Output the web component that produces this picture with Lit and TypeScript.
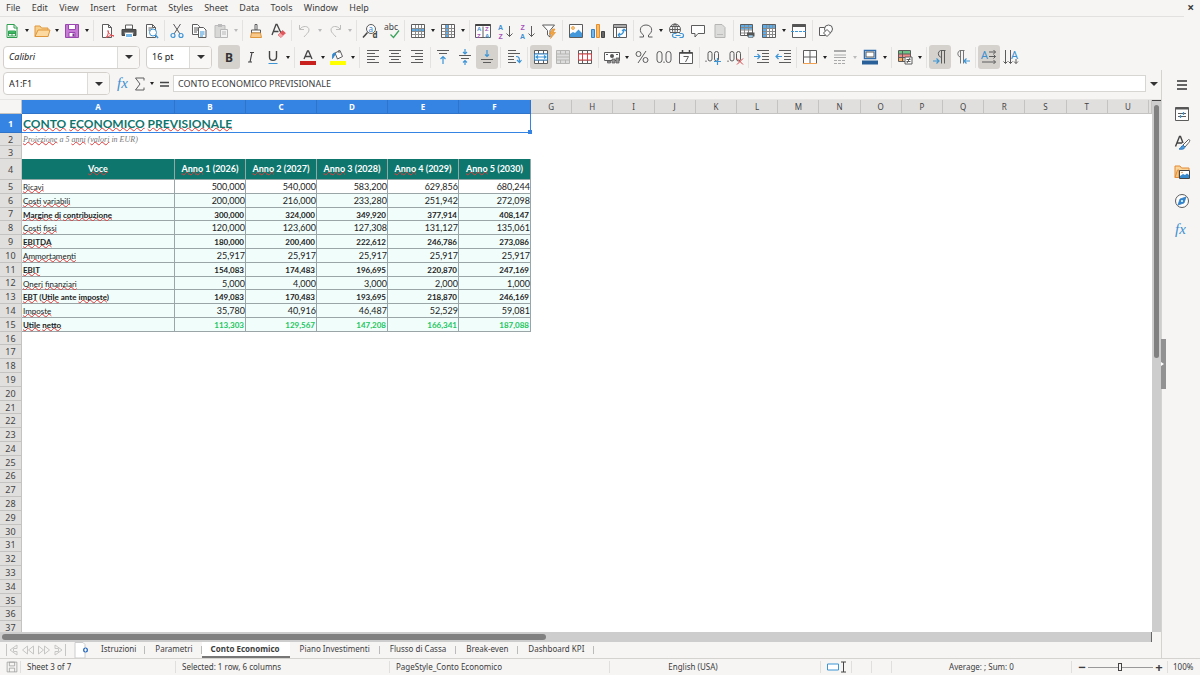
import { LitElement, html, css, svg, nothing } from "lit";
import { customElement, property } from "lit/decorators.js";
import { classMap } from "lit/directives/class-map.js";

const grid = (fill: unknown) => svg`<path d="M1.5 1.5h13v13h-13z" fill="#fdfdfd"/>${fill}<path d="M1.5 5.5h13M1.5 8.5h13M1.5 11.5h13M5.5 1.5v13M8.5 1.5v13M11.5 1.5v13" fill="none" stroke="#8a8a8a"/><path d="M1.5 1.5h13v13h-13z" class="k"/>`;
const pages = svg`<path d="M3.5 1.5h6l3 3v10h-9zM9.5 1.5v3h3" class="k w"/>`;
const decimals = svg`<path d="M1 11.5v1.500" class="k"/><rect x="3" y="2.500" width="4" height="9.500" rx="2" class="k"/><rect x="9.500" y="2.500" width="4" height="9.500" rx="2" class="k"/>`;

const ICONS: Record<string, unknown> = {
  new: svg`<path d="M3 1.500h7l3 3v10H3z" fill="#fff" stroke="#2e9e4f"/><path d="M10 1v4h3.500M4.500 8h7v5h-7zM4.500 10.500h7M8 8v5" fill="none" stroke="#2e9e4f"/><path d="M5 8h6v2H5z" fill="#3db562"/>`,
  open: svg`<path d="M1 13.500V3h5l1.500 2H14v8.500z" fill="#f7d08c" stroke="#e0963a"/><path d="M1 13.500 4 7h12l-2 6.500z" fill="#fbd9a0" stroke="#e0963a"/>`,
  save: svg`<path d="M1.500 1.500h13v13h-13z" fill="#c77bd6" stroke="#9b46b0"/><path d="M4.500 1.500h7v5h-7zM5 14V9.500h6V14z" fill="#fff" stroke="#9b46b0"/><path d="M8.500 10.500h2v3h-2z" fill="#7d3590"/>`,
  pdf: svg`${pages}<path d="M7 14.500c3-3 2.500-7 2-7s0 4 6 5.500c-3-1-5 0-8 1.500z" fill="#fff" stroke="#e0474c"/>`,
  print: svg`<path d="M4.500 2h7v4h-7z" class="k w"/><path d="M1 6.500h14v6H1z" fill="#555" stroke="#444"/><path d="M3.500 10h9" stroke="#ddd"/><path d="M4.500 10.500h7v4h-7z" fill="#7ab8e8" stroke="#fff"/>`,
  preview: svg`${pages}<path d="M5.500 5h4M5.500 7h2" class="k"/><circle cx="10" cy="9.500" r="3.500" fill="#fff" stroke="#3d95d6"/><path d="m12.500 12 2.500 3" stroke="#3d95d6" stroke-width="1.500"/>`,
  cut: svg`<path d="M4.500 1 11 11M11.500 1 5 11" class="k"/><circle cx="4" cy="12.500" r="2" class="b"/><circle cx="12" cy="12.500" r="2" class="b"/>`,
  copy: svg`<path d="M1.500 1.500h5l2 2v8h-7zM3 5h4M3 7h4M3 9h3" class="k w"/><path d="M7.500 4.500h5l2.500 2.500v7.500H7.500z" class="k w"/><path d="M9 9h4.500M9 11h4.500M9 13h3" class="b"/>`,
  paste: svg`<path d="M2 2.500h10v12H2z" fill="#d8d8d6" stroke="#bbb"/><path d="M5 1h4v3H5z" fill="#bbb"/><path d="M7.500 6.500h7v8h-7zM9 9h4M9 11h4" fill="#f2f2f2" stroke="#b8b8b8"/>`,
  brush: svg`<path d="M7 1.500h2v5.500H7z" class="k w"/><path d="M3.500 7h9v3h-9z" class="k w"/><path d="m3.500 10-1 4.500h11l-1-4.500z" fill="#f8c98a" stroke="#e0963a"/>`,
  clear: svg`<path d="m2 12 4-10.500h1L11 10M3.500 8.500h5" fill="none" stroke="#444" stroke-width="1.300"/><path d="m8 12 4.500-4.500 3 2.500-4.500 4.500z" fill="#e0565b" stroke="#d23b41" stroke-width=".5"/><path d="m8 12 2-2 3 2.500-2 2z" fill="#f4a4a7"/>`,
  undo: svg`<path d="M2.500 2v4.500H7M3 6c2.500-3.500 9-3.500 9 1 0 3-3 4-5 7" fill="none" stroke="#bdbdbb"/>`,
  redo: svg`<path d="M13.500 2v4.500H9M13 6C10.500 2.500 4 2.500 4 7c0 3 3 4 5 7" fill="none" stroke="#bdbdbb"/>`,
  find: svg`<circle cx="9" cy="6" r="4.500" class="k w"/><path d="m5.500 9.500-4.500 5" stroke="#444" stroke-width="1.500"/><text x="6.500" y="8.500" font-size="8" fill="#2f87d0">a</text><text x="10.500" y="15" font-size="8" fill="#444" font-weight="700">d</text>`,
  abc: svg`<text x="0" y="7" font-size="8.500" fill="#444">abc</text><path d="m6.500 11.500 3 3L15 7.500" fill="none" stroke="#3aa35b" stroke-width="1.300"/>`,
  row: grid(svg`<path d="M1.500 5h13v4h-13z" fill="#5aaceb"/>`),
  col: grid(svg`<path d="M5 1.500h4v13H5z" fill="#5aaceb"/>`),
  sort: svg`<path d="M.5 1.500h15v13H.5zM8 3.500v11" class="k w"/><path d="M.5 2h15" stroke="#444" stroke-width="2"/><g font-size="6" class="az"><text x="2" y="8" class="bt">A</text><text x="2" y="14.500" class="pt">Z</text><text x="10" y="8" class="pt">Z</text><text x="10" y="14.500" class="bt">A</text></g>`,
  az: svg`<g font-size="7" class="az"><text x="1" y="7" class="bt">A</text><text x="1.500" y="15.500" class="pt">Z</text></g><path d="M12.500 3v10.500m-3-3 3 3 3-3" class="k"/>`,
  za: svg`<g font-size="7" class="az"><text x="1.500" y="7" class="pt">Z</text><text x="1" y="15.500" class="bt">A</text></g><path d="M12.500 3v10.500m-3-3 3 3 3-3" class="k"/>`,
  filter: svg`<path d="M1.500 2h12L9 7.500V14l-2.500-2V7.500z" class="k w"/><path d="m11.500 6-3 5h2.500l-1.500 4.500 5-6H12l2-3.500z" fill="#f2a645" stroke="#e38a20" stroke-width=".6"/>`,
  image: svg`<path d="M1.500 1.500h13v13h-13z" class="k w"/><circle cx="5" cy="5" r="1.500" fill="#f7c77c" stroke="#e9963a" stroke-width=".7"/><path d="m2 14 0-3 3-2 2 1 3.500-3.500L14 10v4z" fill="#4397db"/>`,
  chart: svg`<path d="M1.500 6.500h3v8h-3z" fill="#70b8ee" stroke="#3583c4"/><path d="M6.500 1.500h3v13h-3z" fill="#f7bd6c" stroke="#e38e2c"/><path d="M11.500 8.500h3v6h-3z" fill="#666" stroke="#444"/>`,
  pivot: svg`<path d="M1.500 1.500h13v13h-13zM1.500 4.500h13M4.500 1.500v13" class="k w"/><path d="M2 2h12v2H2z" fill="#aaa"/><path d="M6 12c4 0 6-2 6-6M6 12l2-2M6 12l2 2M12 6l-2 2M12 6l2 2" class="b"/>`,
  omega: svg`<path d="M1.500 14h4v-2C.500 9 1.500 2 8 2s7.500 7 2.500 10v2h4" class="k"/>`,
  link: svg`<circle cx="7" cy="6.500" r="5.500" class="k w"/><path d="M1.500 6.500h11M2.500 3.500h9M2.500 9.500h9M7 1v11" class="k"/><ellipse cx="7" cy="6.500" rx="2.500" ry="5.500" class="k"/><path d="M3 10h13v5H3z" fill="#f6f5f4"/><path d="M8.500 14.500h-2a2 2 0 0 1 0-4h2M11.500 10.500h2a2 2 0 0 1 0 4h-2M7.500 12.500h5" class="b"/>`,
  comment: svg`<path d="M1.500 2.500h13v8H8L5 14v-3.500H1.500z" class="k w"/>`,
  header: svg`<path d="M3 1.500h7l3 3v10H3z" fill="#dcdcda" stroke="#b5b5b3"/><path d="M5 11.500h6" stroke="#bbb"/>`,
  printarea: svg`<path d="M1.500 1.500h12v11h-12z" fill="#fdfdfd"/><path d="M1.500 1.500h12v5h-12z" fill="#5aaceb"/><path d="M1.500 4.500h12M1.500 7h12M1.500 10h12M5.500 1.500v11M9.500 1.500v11" fill="none" stroke="#888"/><path d="M1.500 1.500h12v11h-12z" class="k"/><path d="M8 9.500h7.500v4H8z" fill="#555"/><path d="M9.500 12h4.500v2.500H9.500z" fill="#9fd0f4" stroke="#555" stroke-width=".6"/>`,
  freeze: grid(svg`<path d="M1.500 1.500h13v4h-9v9h-4z" fill="#5aaceb"/>`),
  split: svg`<path d="M1.500 1.500h13v13h-13z" class="k w"/><path d="M1.500 2.500h13" stroke="#555" stroke-width="3"/><path d="M0 8.500h16" class="b" stroke-dasharray="3 1"/>`,
  shapes: svg`<path d="M1.500 4.500h6v8h-6z" class="k w"/><circle cx="10.500" cy="6" r="4" class="k w"/><path d="m9 6.500 3.500 3.500L9 13.500 5.500 10z" class="k w"/>`,
  bold: svg`<text x="4" y="12.500" font-size="12" font-weight="700" fill="#333">B</text>`,
  italic: svg`<path d="M7 3.500h4M5 13h4M9 3.500 7 13" fill="none" stroke="#444" stroke-width="1.200"/>`,
  underline: svg`<path d="M4.500 2v6c0 4.500 7 4.500 7 0V2" fill="none" stroke="#444" stroke-width="1.400"/><path d="M3.500 14.500h9" stroke="#3d95d6"/>`,
  color: svg`<path d="m4 10 3.500-8h1L12 10M5.500 7.500h5" fill="none" stroke="#444" stroke-width="1.300"/><path d="M0 12h16v4H0z" fill="#c9211e"/>`,
  fill: svg`<path d="m5 4 5-2.500 2.500 6L7.500 10zM9 1v3" class="k w"/><path d="M5 4C2 4 2.500 7 2.500 9.500 4 8 4 6 5.500 5z" fill="#2f87d0" stroke="#2f87d0"/><path d="M0 12h16v4H0z" fill="#ffff00"/>`,
  left: svg`<path d="M2 1.500h12M2 4.500h8M2 7.500h12M2 10.500h8M2 13.500h12" class="k"/>`,
  center: svg`<path d="M2 1.500h12M4 4.500h8M2 7.500h12M4 10.500h8M2 13.500h12" class="k"/>`,
  right: svg`<path d="M2 1.500h12M6 4.500h8M2 7.500h12M6 10.500h8M2 13.500h12" class="k"/>`,
  top: svg`<path d="M2 1.500h12M4 4.500h8" class="k"/><path d="M8 15V7.500m-2.500 2.500L8 7.500l2.500 2.500" class="b"/>`,
  middle: svg`<path d="M2 6.500h12M4 9.500h8" class="k"/><path d="M8 0v4.500M6 3l2 2 2-2M8 16v-4M6 13.500l2-2 2 2" class="b"/>`,
  bottom: svg`<path d="M2 10.500h12M4 13.500h8" class="k"/><path d="M8 1v6.500M6 5.500l2 2 2-2" class="b"/>`,
  wrap: svg`<path d="M2 1.500h8M2 4.500h12M2 7.500h6M2 10.500h6M2 13.500h8" class="k"/><path d="M10 7.500c3 0 3.500 1 3.500 5.500m-2.500-2 2.500 2.500L15.500 11" class="b"/>`,
  merge: svg`<path d="M1.500 1.500h13v13h-13zM1.500 5h13M1.500 11h13M5.500 1.500V5M10.500 1.500V5M5.500 11v3.500M10.500 11v3.500" class="k w"/><path d="M1.500 5h13v6h-13z" fill="#fff" stroke="#2f87d0"/><path d="M3 8h10M5 6.500 3 8l2 1.500M11 6.500 13 8l-2 1.500" class="b"/>`,
  unmerge: svg`<path d="M1.500 1.500h13v13h-13zM1.500 5h13M1.500 11h13M5.500 1.500V5M10.500 1.500V5M5.500 11v3.500M10.500 11v3.500M1.500 8h13" fill="#ddd" stroke="#b5b5b3"/>`,
  splitcells: svg`<path d="M1.500 1.500h13v13h-13zM1.500 5h13M1.500 11h13M5.500 1.500V5M10.500 1.500V5M5.500 11v3.500M10.500 11v3.500" class="k w"/><path d="M1.500 5h13v6h-13zM5.500 5v6M10.500 5v6" fill="#fff" stroke="#d94045"/>`,
  currency: svg`<path d="M.5 3.500h15v8H.5z" class="k w"/><circle cx="8" cy="7" r="2" fill="#555"/><path d="M2 5.500h2M12 5.500h2" class="k"/><path d="M3.500 12h3v2h-3zM8 10h3v4H8zM12 9h3v5h-3z" fill="#999" stroke="#555" stroke-width=".7"/>`,
  percent: svg`<circle cx="4.500" cy="5" r="2.500" class="k"/><circle cx="11.500" cy="11" r="2.500" class="k"/><path d="m12 2-8 12" class="k"/>`,
  number: svg`<rect x="1" y="2.500" width="5" height="11" rx="2.500" class="k"/><rect x="10" y="2.500" width="5" height="11" rx="2.500" class="k"/><path d="M8 12.500v1.500" class="k"/>`,
  date: svg`<path d="M1.500 3.500h13v11h-13z" class="k w"/><path d="M1.500 4h13M4.500 1v3M11.500 1v3" stroke="#444" stroke-width="1.500"/><path d="M5.500 7.500h5l-3 5.500" class="k"/>`,
  adddec: svg`${decimals}<path d="M12.500 9v7M9 12.500h7" class="b"/>`,
  deldec: svg`${decimals}<path d="m10 9.500 6 6M16 9.500l-6 6" fill="none" stroke="#d94045"/>`,
  indent: svg`<path d="M3 1.500h12M8 4.500h7M8 7.500h7M8 10.500h7M3 13.500h12" class="k"/><path d="M0 7.500h6M3.500 5 6 7.500 3.500 10" class="b"/>`,
  outdent: svg`<path d="M3 1.500h12M8 4.500h7M8 7.500h7M8 10.500h7M3 13.500h12" class="k"/><path d="M0 7.500h6M2.500 5 0 7.500 2.500 10" class="b"/>`,
  borders: svg`<path d="M1.500 1.500h13v13h-13zM8 1.500v13M1.500 8h13" class="k w"/><path d="M1 14.500h14" stroke="#f0a050"/>`,
  lines: svg`<path d="M2 2h12" stroke="#aaa" stroke-width="2"/><path d="M2 6h12M2 8.500h12" stroke="#aaa"/><path d="M2 11.500h12M2 14.500h12" stroke="#aaa" stroke-dasharray="3 1"/>`,
  bordercolor: svg`<path d="M2.500 1.500h11v8h-11z" fill="#fff" stroke="#2f6db0" stroke-width="1.500"/><path d="M4 3h8v5H4z" class="k"/><path d="M0 11.500h16v4H0z" fill="#2a6099"/>`,
  conditional: svg`<path d="M1.500 1.500h12v11h-12z" class="k w"/><path d="M2 2h11v3H2z" fill="#6cc486"/><path d="M2 5h11v3H2z" fill="#f08a86"/><path d="M2 8h5v4H2z" fill="#f6b26b"/><path d="M1.500 5h12M1.500 8.500h12M5.500 1.500v11" class="k"/><path d="M8 8h7v7H8zM9.500 10.500h4M9.500 12.500h4M13 9l-3 5" class="k w"/>`,
  ltr: svg`<path d="M13.500 1.500H8.500a3.500 3.500 0 0 0 0 6.500H9M9.500 1.500v13M12.500 1.500v13" class="k"/><path d="M1 12h6M4.500 9.500 7 12l-2.500 2.500" class="b"/>`,
  rtl: svg`<path d="M10.500 1.500H6a3.500 3.500 0 0 0 0 6.500h.500M6.500 1.500v13M9.500 1.500v13" fill="none" stroke="#777"/><path d="M10 12h6M12.500 9.500 10 12l2.500 2.500" class="b"/>`,
  horiz: svg`<text x="0" y="10" font-size="11" class="bt">A</text><path d="M8 3h6.500M12.500 1l2 2-2 2M8 7.500h6.500M12.500 5.500l2 2-2 2M1 13h13.500M12.500 11l2 2-2 2" class="k"/>`,
  vert: svg`<text x="8" y="10" font-size="11" class="bt">A</text><path d="M2.500 1v13.500M.5 12.500l2 2 2-2M7.500 1v13.500M5.500 12.500l2 2 2-2M13 10v4.500M11 12.500l2 2 2-2" class="k"/>`,
  fx: svg`<text x="1" y="12" font-size="15" class="fx">fx</text>`,
  sigma: svg`<path d="M12 4.500V2H3.500L8 8l-4.500 6H12v-2.500" class="k"/>`,
  equals: svg`<path d="M4 6.500h9M4 10h9" stroke="#444" stroke-width="1.500"/>`,
  menu: svg`<path d="M3 4h10M3 8h10M3 12h10" stroke="#333" stroke-width="1.500"/>`,
  props: svg`<path d="M1.500 1.500h13v13h-13z" class="k w"/><path d="M1.500 2.500h13" stroke="#555" stroke-width="2"/><path d="M4 7.500h8M4 10.500h8" class="k"/><path d="M9.500 6v3M6.500 9v3" class="b"/>`,
  styles: svg`<path d="m1.500 11.500 4-10h1L9 8M3 8h5" fill="none" stroke="#444" stroke-width="1.400"/><path d="m9 10 5.500-5.500c2 0 1.500 2-.5 4L11 12z" class="k w"/><path d="M5 14c2 0 1.500-3.500 4.500-3.500 3 2.500 0 4.500-4.500 3.500z" fill="#4a9be0" stroke="#2f77bd"/>`,
  gallery: svg`<path d="M1 13.500V2h5l1.500 2H15v3" fill="#f9d59b" stroke="#e58a35"/><path d="M1 13.500 3.500 6H5v7.500z" fill="#f7c67b" stroke="#e58a35"/><path d="M5.500 6.500h10v8h-10z" fill="#fff" stroke="#444"/><path d="m6 14 0-2 3-2 2 1 2-1.500 2 1.500v3z" fill="#3688cd"/><circle cx="8" cy="8.500" r=".8" fill="#e58a35"/>`,
  navigator: svg`<circle cx="8" cy="8" r="6.500" class="k w"/><path d="m12 4-2 6-6 2 2-6z" fill="#2f87d0" stroke="#2f77bd" stroke-width=".7"/><circle cx="8" cy="8" r="1" fill="#fff"/>`,
  modified: svg`<path d="M1.500 1.500h13v13h-13zM4.500 1.500h7v5h-7zM4.500 14.500V9.500h7v5" fill="none" stroke="#999"/>`,
  sheetadd: svg`<path d="M1 .500h8l2 2V16H1z" fill="#fff" stroke="#ccc"/><circle cx="11.500" cy="8" r="2.500" fill="#2f6fc0"/><path d="M10 8h3M11.500 6.500v3" stroke="#fff"/>`,
  first: svg`<path d="M2.500 2v12M13 3 6 8l7 5v-3.500H9.500v-3H13z" class="n"/>`,
  prev: svg`<path d="m7.500 4-5 4 5 4zM13.500 4l-5 4 5 4z" class="n"/>`,
  next: svg`<path d="m2.500 4 5 4-5 4zM8.500 4l5 4-5 4z" class="n"/>`,
  last: svg`<path d="M13.500 2v12M3 3l7 5-7 5V9.500h3.500v-3H3z" class="n"/>`,
};

@customElement("ui-icon")
class UiIcon extends LitElement {
  @property() name = "";
  static styles = css`
    :host { display: block; width: 16px; height: 16px; }
    svg { display: block; width: 100%; height: 100%; overflow: visible; font-family: "Noto Sans", sans-serif; }
    .k { fill: none; stroke: #5c5c5c; }
    .w { fill: #fdfdfd; }
    .b { fill: none; stroke: #3d95d6; stroke-width: 1.2; }
    .n { fill: none; stroke: #c6c6c4; }
    .az { font-family: "Liberation Sans", sans-serif; font-weight: 700; }
    .bt { fill: #3d8fd0; }
    .pt { fill: #a653ba; }
    .fx { fill: #3d8fd0; font-family: "Liberation Serif", serif; font-style: italic; }
  `;
  render() {
    return html`<svg viewBox="0 0 16 16" aria-hidden="true">${ICONS[this.name] ?? nothing}</svg>`;
  }
}

/* A trailing "+" gives the tool a drop-down arrow, "*" marks it pressed, "-" disables its arrow. */
const STANDARD = [
  ["new+", "open+", "save+"], ["pdf", "print", "preview"], ["cut", "copy", "paste-"], ["brush", "clear"],
  ["undo-", "redo-"], ["find", "abc"], ["row+", "col+"], ["sort", "az", "za", "filter"], ["image", "chart", "pivot"],
  ["omega+", "link", "comment", "header"], ["printarea", "freeze+", "split"], ["shapes"],
];
const FORMATTING = [
  ["bold*", "italic", "underline+"], ["color+", "fill+"], ["left", "center", "right"], ["top", "middle", "bottom*"],
  ["wrap"], ["merge*", "unmerge", "splitcells"], ["currency+", "percent", "number", "date"], ["adddec", "deldec"],
  ["indent", "outdent"], ["borders+", "lines-", "bordercolor+"], ["conditional+"], ["ltr*", "rtl"], ["horiz*", "vert"],
];

@customElement("tool-groups")
class ToolGroups extends LitElement {
  @property({ attribute: false }) groups: string[][] = [];
  static styles = css`
    :host { display: flex; justify-content: space-between; align-items: center; }
    .group { display: flex; }
    .sep { width: 1px; height: 21px; background: #e3e2e0; }
    button { border: 0; padding: 0; background: none; display: flex; align-items: center; justify-content: center; height: 24px; border-radius: 3px; }
    .tool { width: 22px; }
    .tool.on { background: #d5d2ce; }
    .more { width: 8px; }
    .more::before { content: ""; border: 2px solid transparent; border-top: 3px solid #222; border-bottom: 0; }
    .more.off::before { border-top-color: #bbb; }
  `;
  render() {
    return this.groups.map((group, i) => html`
      ${i ? html`<span class="sep"></span>` : nothing}
      <div class="group">${group.map((tool) => {
        const name = tool.replace(/[+*-]/, "");
        return html`<button class=${classMap({ tool: true, on: tool.endsWith("*") })} aria-label=${name}><ui-icon name=${name}></ui-icon></button>
          ${/[+-]$/.test(tool) ? html`<button class=${classMap({ more: true, off: tool.endsWith("-") })} aria-label=${name + " options"}></button>` : nothing}`;
      })}</div>`);
  }
}

type Row = { label: string; values: string[]; kind: string };
/* Words between underscores are flagged by the spelling checker. */
const ROWS: Row[] = [
  { label: "_Ricavi_", values: ["500,000", "540,000", "583,200", "629,856", "680,244"], kind: "plain first" },
  { label: "_Costi_ _variabili_", values: ["200,000", "216,000", "233,280", "251,942", "272,098"], kind: "plain" },
  { label: "_Margine_ _di_ _contribuzione_", values: ["300,000", "324,000", "349,920", "377,914", "408,147"], kind: "total" },
  { label: "_Costi_ _fissi_", values: ["120,000", "123,600", "127,308", "131,127", "135,061"], kind: "plain" },
  { label: "_EBITDA_", values: ["180,000", "200,400", "222,612", "246,786", "273,086"], kind: "total" },
  { label: "_Ammortamenti_", values: ["25,917", "25,917", "25,917", "25,917", "25,917"], kind: "plain" },
  { label: "_EBIT_", values: ["154,083", "174,483", "196,695", "220,870", "247,169"], kind: "total" },
  { label: "_Oneri_ _finanziari_", values: ["5,000", "4,000", "3,000", "2,000", "1,000"], kind: "plain" },
  { label: "_EBT_ (_Utile_ ante _imposte_)", values: ["149,083", "170,483", "193,695", "218,870", "246,169"], kind: "total" },
  { label: "_Imposte_", values: ["35,780", "40,916", "46,487", "52,529", "59,081"], kind: "plain" },
  { label: "_Utile_ _netto_", values: ["113,303", "129,567", "147,208", "166,341", "187,088"], kind: "total net" },
];
const COLUMNS = [..."ABCDEFGHIJKLMNOPQRSTU"];
const YEARS = ["1 (2026)", "2 (2027)", "3 (2028)", "4 (2029)", "5 (2030)"];

const spell = (text: string) => text.split("_").map((part, i) => (i % 2 ? html`<span class="typo">${part}</span>` : part));

@customElement("sheet-grid")
class SheetGrid extends LitElement {
  static styles = css`
    :host { display: block; overflow: hidden; background: #fff; color: #222; font: 9px/13px Lato, sans-serif; }
    table {
      display: grid; height: calc(100% + 3px);
      grid-template-columns: 22px 153px repeat(4, 71px) 72px repeat(15, 1fr) 3px;
      grid-template-rows: 14px 19px 13px 13px 21px repeat(33, minmax(0, 1fr));
    }
    thead, tbody, tr { display: contents; }
    th, td { box-sizing: border-box; padding: 0; min-width: 0; min-height: 0; white-space: nowrap; font-weight: 400; }
    .head { background: #e0dfde; color: #444; font: 8px/13px "Noto Sans", sans-serif; text-align: center; border: 0 solid #c4c3c1; border-width: 0 1px 1px 0; display: flex; align-items: center; justify-content: center; }
    .num { font-size: 9px; }
    .head.corner { background: #f6f5f4; }
    .head.on { background: #3584e4; border-color: #2f74c9; color: #fff; font-weight: 700; }
    .rest { grid-column: 2 / -1; }
    .after { grid-column: 8 / -1; }
    .title { grid-column: 2 / 8; position: relative; border: 1px solid #3584e4; border-width: 0 1px 1px 0; color: #0f766e; font: 700 12px/19px Lato, sans-serif; padding-left: 1px; }
    .title::after { content: ""; position: absolute; right: -2px; bottom: -2px; width: 4px; height: 4px; background: #3584e4; }
    .sub { color: #777; font: italic 8px/14px "Liberation Serif", serif; padding-left: 1px; }
    .year { background: #0f766e; color: #fff; font-weight: 700; text-align: center; border: 0 solid #92a8a6; border-width: 0 1px 1px 0; line-height: 20px; }
    .cell { background: #f0fdfa; border: 0 solid #9aa5a8; border-width: 0 1px 1px 0; text-align: right; }
    .label { text-align: left; padding-left: 1px; font-size: 8px; line-height: 15px; }
    .first .cell { background: #fff; }
    .total .cell { font-weight: 700; font-size: 8px; line-height: 15px; padding-right: 1px; }
    .net .value { color: #22c55e; }
    .typo { text-decoration: underline wavy #e0303088 1px; text-decoration-color: #e23a3a; text-decoration-skip-ink: none; text-underline-offset: -1px; }
  `;
  head(n: number) {
    return html`<th scope="row" class=${classMap({ head: true, num: true, on: n === 1 })}>${n}</th>`;
  }
  render() {
    return html`<table>
      <thead><tr><th class="head corner"></th>
        ${COLUMNS.map((c, i) => html`<th scope="col" class=${classMap({ head: true, on: i < 6 })}>${c}</th>`)}<th class="head"></th></tr></thead>
      <tbody>
        <tr>${this.head(1)}<td class="title">${spell("_CONTO_ _ECONOMICO_ _PREVISIONALE_")}</td><td class="after"></td></tr>
        <tr>${this.head(2)}<td class="rest sub">${spell("_Proiezione_ a 5 _anni_ (_valori_ in EUR)")}</td></tr>
        <tr>${this.head(3)}<td class="rest"></td></tr>
        <tr>${this.head(4)}<th class="year">${spell("_Voce_")}</th>${YEARS.map((y) => html`<th class="year">${spell("_Anno_ " + y)}</th>`)}<td class="after"></td></tr>
        ${ROWS.map((r, i) => html`<tr class=${r.kind}>${this.head(i + 5)}<td class="cell label">${spell(r.label)}</td>
          ${r.values.map((v) => html`<td class="cell value">${v}</td>`)}<td class="after"></td></tr>`)}
        ${Array.from({ length: 22 }, (_, i) => html`<tr>${this.head(i + 16)}<td class="rest"></td></tr>`)}
      </tbody></table>`;
  }
}

const MENUS = ["File", "Edit", "View", "Insert", "Format", "Styles", "Sheet", "Data", "Tools", "Window", "Help"];
const TABS = ["Istruzioni", "Parametri", "Conto Economico", "Piano Investimenti", "Flusso di Cassa", "Break-even", "Dashboard KPI"];

@customElement("app-root")
class AppRoot extends LitElement {
  static styles = css`
    :host { display: flex; flex-direction: column; height: 100vh; overflow: hidden; background: #f6f5f4; color: #3c3c3c; font: 8px/12px "Noto Sans", sans-serif; }
    button, input { font: inherit; color: inherit; border: 0; padding: 0; margin: 0; background: none; min-width: 0; }
    .menus { box-sizing: border-box; display: flex; align-items: center; justify-content: space-between; height: 17px; margin-right: 16px; padding-left: 6px; border-bottom: 1px solid #e2e1df; font-size: 9px; }
    .list { display: flex; justify-content: space-between; flex: 0 1 363px; }
    .close { margin-right: -10px; font-size: 12px; font-weight: 700; }
    .bar { display: flex; align-items: center; height: 27px; padding-left: 1px; }
    .standard { flex: 0 1 836px; }
    .format { height: 26px; gap: 6px; padding-left: 3px; }
    .format tool-groups { flex: 0 1 804px; }
    .combo { box-sizing: border-box; display: flex; height: 23px; border: 1px solid #d3d0cc; border-radius: 4px; background: #fff; overflow: hidden; font-size: 9px; }
    .combo input { flex: 1; padding-left: 5px; color: #222; }
    .drop { width: 22px; background: #f8f7f6; border-left: 1px solid #dddbd8; display: flex; align-items: center; justify-content: center; }
    .drop::before, .expand::before { content: ""; border: 4px solid transparent; border-top: 4px solid #333; border-bottom: 0; }
    .font { width: 137px; font-style: italic; }
    .size { width: 66px; }
    .ref { width: 107px; }
    .body { flex: 1; display: flex; min-height: 0; }
    .main { flex: 1; min-width: 0; display: flex; flex-direction: column; }
    .formula { box-sizing: border-box; display: flex; align-items: center; height: 30px; padding: 0 0 2px 3px; border-bottom: 1px solid #e6e5e3; }
    .tools { display: flex; align-items: center; margin-left: 6px; }
    .tiny { width: 8px; display: flex; justify-content: center; }
    .tiny::before { content: ""; border: 2px solid transparent; border-top: 3px solid #222; border-bottom: 0; }
    .line { flex: 1; box-sizing: border-box; height: 17px; margin-left: 1px; padding-left: 4px; background: #fff; border: 1px solid #d8d6d3; font-size: 9px; }
    .expand { width: 15px; display: flex; align-items: center; justify-content: center; }
    .area { flex: 1; display: flex; min-height: 0; }
    sheet-grid { flex: 1; min-width: 0; }
    .vscroll { width: 9px; background: #cdcdcd; border-top: 1px solid #444; padding: 4px 2px 0; box-sizing: border-box; }
    .vthumb { height: 48%; border-radius: 3px; background: #7f807f; }
    .hscroll { height: 10px; background: #cdcdcd; margin-right: 9px; padding: 2px; box-sizing: border-box; border-right: 1px solid #666; }
    .hthumb { height: 6px; width: 47.4%; border-radius: 3px; background: #7f807f; }
    .tabs { display: flex; height: 16px; align-items: center; }
    .navs { display: flex; padding-left: 4px; margin-right: 6px; }
    .add { width: 14px; height: 16px; margin-right: 3px; }
    .tab { height: 16px; padding: 0 9px 2px 10px; position: relative; box-sizing: border-box; }
    .tab::after { content: ""; position: absolute; right: 0; top: 4px; height: 8px; border-right: 1px solid #bbb; }
    .tab.on { background: #fff; font-weight: 700; border-bottom: 2px solid #777; padding: 0 10px 0 9px; }
    .tab.on::after { display: none; }
    .on ~ .tab { padding: 0 10px 2px 10px; }
    aside { position: relative; width: 39px; box-sizing: border-box; border-left: 1px solid #d5d3d0; padding: 7px 0 0 2px; display: flex; flex-direction: column; align-items: center; gap: 13px; }
    aside button { display: block; }
    .grip { position: absolute; left: -1px; top: 269px; width: 5px; height: 50px; background: #929292; display: flex; align-items: center; }
    .grip::before { content: ""; border: 2px solid transparent; border-left: 3px solid #fff; border-right: 0; }
    .status { display: grid; grid-template-columns: 21px 155fr 214fr 220fr 211fr 31px 20px 20px 180fr 96px 32px; height: 16px; border-top: 1px solid #d5d3d0; align-items: center; }
    .status > * { height: 12px; padding-left: 6px; border-right: 1px solid #e0dfdd; white-space: nowrap; box-sizing: border-box; }
    .status > :last-child { border: 0; padding-left: 5px; }
    .mod ui-icon { width: 12px; height: 12px; }
    .status .mid { text-align: center; padding: 0; }
    .status .lang { padding-right: 44px; }
    .mode svg { display: block; width: 20px; height: 12px; }
    .status .zoom { display: flex; align-items: center; gap: 2px; padding-right: 4px; }
    .zoom button { font-size: 13px; font-weight: 700; width: 8px; line-height: 12px; }
    .zoom input { appearance: none; flex: 1; height: 8px; }
    .zoom input::-webkit-slider-runnable-track { height: 8px; background: linear-gradient(#999, #999) center / 100% 1px no-repeat; }
    .zoom input::-webkit-slider-thumb { appearance: none; box-sizing: border-box; width: 4px; height: 8px; background: #f6f5f4; border: 1px solid #444; }
  `;
  render() {
    return html`
      <nav class="menus"><div class="list">${MENUS.map((m) => html`<button>${m}</button>`)}</div><button class="close" aria-label="Close">×</button></nav>
      <div class="bar"><tool-groups class="standard" .groups=${STANDARD}></tool-groups></div>
      <div class="bar format">
        <div class="combo font"><input aria-label="Font name" value="Calibri" /><button class="drop" aria-label="Fonts"></button></div>
        <div class="combo size"><input aria-label="Font size" value="16 pt" /><button class="drop" aria-label="Sizes"></button></div>
        <tool-groups .groups=${FORMATTING}></tool-groups>
      </div>
      <div class="body">
        <div class="main">
          <div class="formula">
            <div class="combo ref"><input aria-label="Name box" value="A1:F1" /><button class="drop" aria-label="Ranges"></button></div>
            <div class="tools">
              <button aria-label="Function wizard"><ui-icon name="fx"></ui-icon></button>
              <button aria-label="Sum"><ui-icon name="sigma"></ui-icon></button>
              <button class="tiny" aria-label="Sum options"></button>
              <button aria-label="Formula"><ui-icon name="equals"></ui-icon></button>
            </div>
            <input class="line" aria-label="Input line" value="CONTO ECONOMICO PREVISIONALE" />
            <button class="expand" aria-label="Expand"></button>
          </div>
          <div class="area"><sheet-grid></sheet-grid><div class="vscroll"><div class="vthumb"></div></div></div>
          <div class="hscroll"><div class="hthumb"></div></div>
          <div class="tabs">
            <div class="navs">${["first", "prev", "next", "last"].map((n) => html`<button aria-label=${n}><ui-icon name=${n}></ui-icon></button>`)}</div>
            <button class="add" aria-label="Add sheet"><ui-icon name="sheetadd"></ui-icon></button>
            ${TABS.map((t, i) => html`<button class=${classMap({ tab: true, on: i === 2 })}>${t}</button>`)}
          </div>
        </div>
        <aside>
          ${["menu", "props", "styles", "gallery", "navigator", "fx"].map((n) => html`<button aria-label=${n}><ui-icon name=${n}></ui-icon></button>`)}
          <div class="grip"></div>
        </aside>
      </div>
      <footer class="status">
        <span class="mod"><ui-icon name="modified"></ui-icon></span>
        <span>Sheet 3 of 7</span><span>Selected: 1 row, 6 columns</span><span>PageStyle_Conto Economico</span>
        <span class="mid lang">English (USA)</span>
        <span class="mode"><svg viewBox="0 0 20 12"><path d="M.5 3h11v6H.5z" fill="#fff" stroke="#3d95d6" /><path d="M14 1h5M14 11h5M16.500 1v10" stroke="#444" /></svg></span>
        <span></span><span></span><span class="mid">Average: ; Sum: 0</span>
        <span class="zoom"><button aria-label="Zoom out">−</button><input type="range" aria-label="Zoom" value="49" /><button aria-label="Zoom in">+</button></span>
        <span>100%</span>
      </footer>`;
  }
}
